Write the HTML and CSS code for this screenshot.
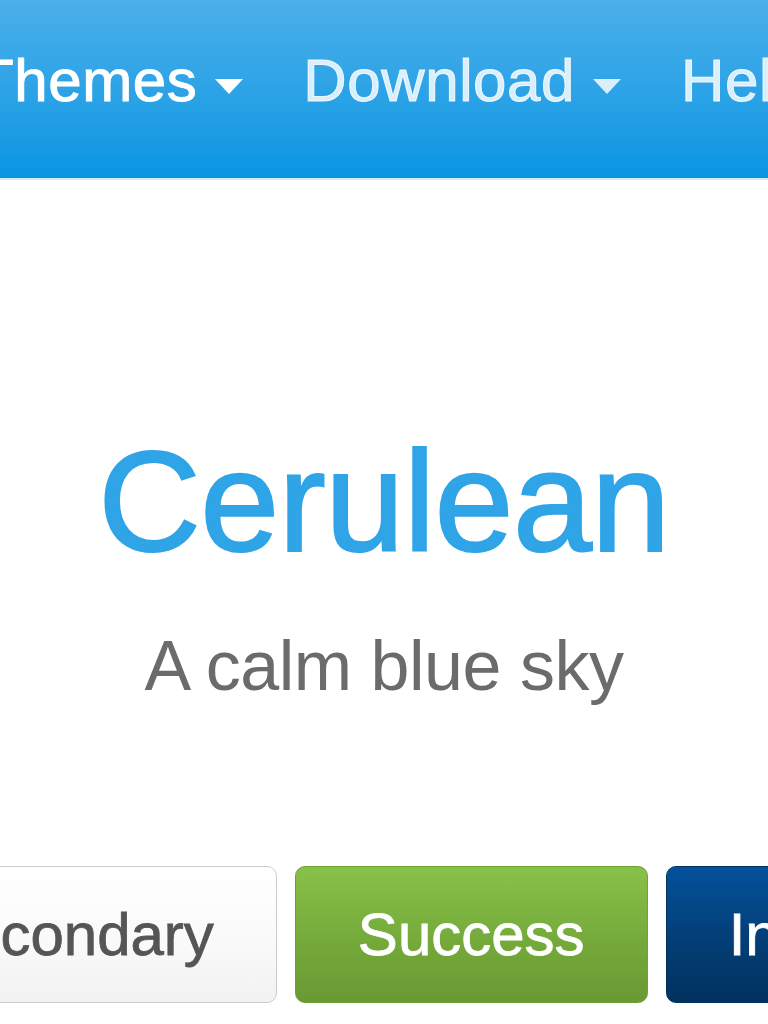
FILE: index.html
```
<!DOCTYPE html>
<html>
	<head>
		<link rel="stylesheet" href="styles.css">
	</head>
	<body>
		<div class="navbar">
			<ul class="nav">
				<li class="nav-item active">Themes <span class="caret"></span></li>
				<li class="nav-item">Download <span class="caret"></span></li>
				<li class="nav-item">Help</li>
			</ul>
		</div>
		<div class="header">
			<h1 class="title">Cerulean</h1>
			<p class="lead">A calm blue sky</p>
		</div>
		<div class="buttons">
			<span class="btn btn-secondary">Secondary</span>
			<span class="btn btn-success">Success</span>
			<span class="btn btn-info">Info</span>
		</div>
	</body>
</html>
```

FILE: styles.css
```
html, body{
	margin:0;
	padding:0;
	overflow:hidden;
	background:#ffffff;
	font-family:"Liberation Sans", Arial, sans-serif;
}
.navbar{
	height:180px;
	box-sizing:border-box;
	padding-top:47px;
	background:linear-gradient(#4aafea, #2aa2e6 55%, #0a95e2);
	border-bottom:2px solid #d2ebfa;
}
.nav{
	display:flex;
	gap:60px;
	margin:0 0 0 -23px;
	padding:0;
	list-style:none;
	white-space:nowrap;
}
.nav-item{
	display:flex;
	align-items:baseline;
	gap:18px;
	font-size:60px;
	line-height:1.149;
	letter-spacing:0.6px;
	color:rgba(255,255,255,0.82);
	-webkit-text-stroke:1px rgba(255,255,255,0.82);
}
.nav-item.active{
	color:#ffffff;
	-webkit-text-stroke:1px #ffffff;
}
.caret{
	display:inline-block;
	width:0;
	height:0;
	border-top:15px solid currentColor;
	border-left:14px solid transparent;
	border-right:14px solid transparent;
	position:relative;
	top:-7px;
}
.header{
	text-align:center;
	padding-top:251px;
}
.title{
	margin:0;
	font-size:142px;
	line-height:1;
	font-weight:normal;
	letter-spacing:-0.6px;
	color:#2fa4e7;
	-webkit-text-stroke:2px #2fa4e7;
}
.lead{
	margin:58px 0 0;
	font-size:70px;
	line-height:1;
	letter-spacing:-0.5px;
	color:#6b6b6b;
}
.buttons{
	display:flex;
	gap:18px;
	margin:165px 0 0 -136px;
	white-space:nowrap;
}
.btn{
	display:flex;
	align-items:center;
	height:137px;
	box-sizing:border-box;
	padding:0 62px;
	border:1px solid transparent;
	border-radius:10px;
	font-size:60px;
	-webkit-text-stroke:0.8px currentColor;
}
.btn-secondary{
	color:#555555;
	background:linear-gradient(#ffffff, #f9f9f9 60%, #f1f1f1);
	border-color:#cccccc;
}
.btn-success{
	color:#ffffff;
	background:linear-gradient(#88c149, #73a839 60%, #699934);
	border-color:#6fa235;
}
.btn-info{
	color:#ffffff;
	background:linear-gradient(#04519b, #033c73 60%, #02325f);
	border-color:#02325f;
}
```
